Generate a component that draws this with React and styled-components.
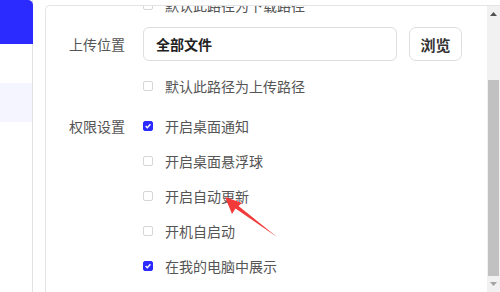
import React, { useLayoutEffect, useRef } from 'react'
import styled, { createGlobalStyle } from 'styled-components'

const Global = createGlobalStyle`
  html, body {
    margin: 0;
    padding: 0;
    background: #fff;
    overflow: hidden;
  }
  body {
    font-family: "Noto Sans CJK SC", "Noto Sans", sans-serif;
  }
`

const Page = styled.div`
  width: 500px;
  height: 292px;
  display: flex;
  overflow: hidden;
`

const Sidebar = styled.div`
  width: 32px;
  flex: none;
  border-right: 1px solid #e2e2e2;
  display: flex;
  flex-direction: column;
`

const SideHeader = styled.div`
  height: 44px;
  background: #2b2bff;
  border-top-right-radius: 5px;
  margin-right: -1px;
`

const SideItem = styled.div`
  height: 39px;
  background: ${p => (p.active ? '#f4f5fe' : 'transparent')};
`

const Panel = styled.div`
  flex: 1;
  margin-left: 12px;
  margin-top: 5px;
  border-top: 1px solid #e4e4e4;
  border-left: 1px solid #e4e4e4;
  border-top-left-radius: 5px;
  display: flex;
  min-width: 0;
`

const Scroller = styled.div`
  flex: 1;
  overflow: hidden;
  position: relative;
`

const Content = styled.div`
  position: relative;
  padding: 0 0 40px 23px;
  display: flex;
  flex-direction: column;
`

const Row = styled.div`
  display: grid;
  grid-template-columns: 74px 1fr;
  align-items: ${p => (p.top ? 'start' : 'center')};
  margin-top: ${p => p.gap || 0}px;
`

const Label = styled.div`
  font-size: 14px;
  color: #555;
  line-height: 20px;
`

const Field = styled.div`
  display: flex;
  gap: 12px;
`

const Input = styled.div`
  width: 254px;
  height: 34px;
  box-sizing: border-box;
  border: 1px solid #dedede;
  border-radius: 6px;
  padding: 0 12px;
  display: flex;
  align-items: center;
  font-size: 14px;
  font-weight: 700;
  color: #222;
`

const Button = styled.div`
  width: 53px;
  height: 34px;
  box-sizing: border-box;
  border: 1px solid #dedede;
  border-radius: 7px;
  display: flex;
  align-items: center;
  justify-content: center;
  font-size: 15px;
  font-weight: 700;
  color: #333;
`

const CheckList = styled.div`
  display: flex;
  flex-direction: column;
  gap: 15px;
`

const Check = styled.div`
  height: 20px;
  display: flex;
  align-items: center;
  gap: 12px;
  font-size: 14px;
  color: #555;
`

const Box = styled.span`
  width: 10px;
  height: 10px;
  box-sizing: border-box;
  border-radius: 2px;
  border: 1px solid ${p => (p.checked ? '#2b2bff' : '#d6d6d6')};
  background: ${p => (p.checked ? '#2b2bff' : '#fff')};
  display: flex;
  align-items: center;
  justify-content: center;
  flex: none;
`

const Arrow = styled.svg`
  position: absolute;
  left: 0;
  top: 0;
  pointer-events: none;
`

const ScrollBar = styled.div`
  width: 13px;
  flex: none;
  background: #f1f1f1;
  display: flex;
  flex-direction: column;
  align-items: center;
`

const ScrollBtn = styled.div`
  height: 17px;
  width: 100%;
  display: flex;
  align-items: center;
  justify-content: center;
`

const Thumb = styled.div`
  width: 11px;
  height: 202px;
  margin-top: 58px;
  background: #c1c1c1;
`

const CheckItem = ({ checked, children }) => (
  <Check>
    <Box checked={checked}>
      {checked && (
        <svg width="8" height="8" viewBox="0 0 8 8">
          <path d="M1.6 4.1 L3.3 5.8 L6.4 2.2" fill="none" stroke="#fff" strokeWidth="1.4" />
        </svg>
      )}
    </Box>
    {children}
  </Check>
)

const perms = [
  ['开启桌面通知', true],
  ['开启桌面悬浮球', false],
  ['开启自动更新', false],
  ['开机自启动', false],
  ['在我的电脑中展示', true],
]

export default function App() {
  const ref = useRef(null)
  useLayoutEffect(() => {
    if (ref.current) ref.current.scrollTop = 11
  }, [])

  return (
    <>
      <Global />
      <Page>
        <Sidebar>
          <SideHeader />
          <SideItem />
          <SideItem active />
        </Sidebar>
        <Panel>
          <Scroller ref={ref}>
            <Content>
              <Row>
                <span />
                <CheckItem>默认此路径为下载路径</CheckItem>
              </Row>
              <Row gap={12}>
                <Label>上传位置</Label>
                <Field>
                  <Input>全部文件</Input>
                  <Button>浏览</Button>
                </Field>
              </Row>
              <Row gap={15}>
                <span />
                <CheckItem>默认此路径为上传路径</CheckItem>
              </Row>
              <Row gap={20} top>
                <Label>权限设置</Label>
                <CheckList>
                  {perms.map(([t, c]) => (
                    <CheckItem key={t} checked={c}>{t}</CheckItem>
                  ))}
                </CheckList>
              </Row>
              <Arrow width="440" height="300" viewBox="0 0 440 300">
                <polygon
                  transform="translate(-46 5)"
                  points="225,197 242,203 238.5,206 277,237 235.5,208.5 232,214"
                  fill="#f23a3a"
                />
              </Arrow>
            </Content>
          </Scroller>
          <ScrollBar>
            <ScrollBtn>
              <svg width="7" height="4" viewBox="0 0 7 4"><polygon points="0,4 7,4 3.5,0" fill="#505050" /></svg>
            </ScrollBtn>
            <Thumb />
            <ScrollBtn>
              <svg width="7" height="4" viewBox="0 0 7 4"><polygon points="0,0 7,0 3.5,4" fill="#a3a3a3" /></svg>
            </ScrollBtn>
          </ScrollBar>
        </Panel>
      </Page>
    </>
  )
}
